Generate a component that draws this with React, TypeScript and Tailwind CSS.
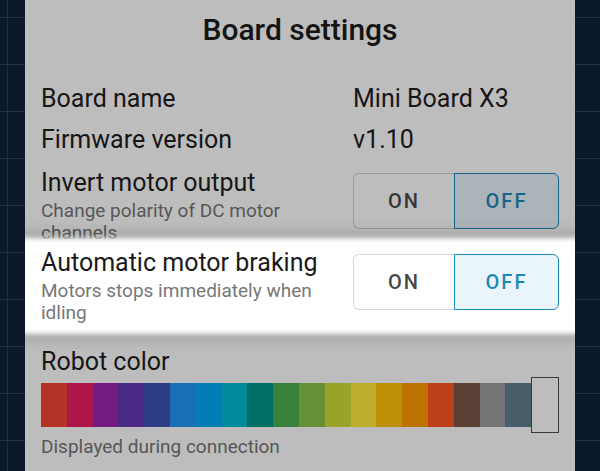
import React from 'react';

const swatches = [
  '#b53228', '#ac1649', '#731d82', '#4c2b87', '#2f3c86', '#186fb4', '#027db5',
  '#008b9d', '#006f65', '#38823b', '#679037', '#98a32a', '#bdae2c', '#bd8f05',
  '#bd7100', '#bd4019', '#5a3f35', '#757575', '#475d67',
];

const Toggle: React.FC<{ dim?: boolean }> = ({ dim }) => {
  return (
    <div className="flex h-[56px] w-[206px] text-[20px] font-medium tracking-[0.1em]">
      <div
        className={`flex w-[101px] items-center justify-center rounded-l-[6px] border border-r-0 ${
          dim ? 'border-[#9c9c9c] text-[#363636]' : 'border-[#d6d6d6] text-[#474747] bg-white'
        }`}
      >
        ON
      </div>
      <div
        className={`flex flex-1 items-center justify-center rounded-r-[6px] border ${
          dim ? 'border-[#146588] bg-[#abb4b9] text-[#146588]' : 'border-[#1b89b8] bg-[#eaf5fb] text-[#1b89b8]'
        }`}
      >
        OFF
      </div>
    </div>
  );
};

const InfoRow: React.FC<{ label: string; value: string }> = ({ label, value }) => (
  <div className="flex h-[41px] items-center text-[25px] leading-[30px] text-[#161616]">
    <span className="w-[312px]">{label}</span>
    <span>{value}</span>
  </div>
);

export default function App() {
  return (
    <div className="flex h-[471px] w-[600px] justify-center overflow-hidden bg-[#0a1829] bg-[linear-gradient(to_right,#223040_1px,transparent_1px),linear-gradient(to_bottom,#223040_1px,transparent_1px)] bg-[length:47px_47px] bg-[position:7px_17px]">
      <div className="h-full w-[550px] overflow-hidden bg-[#bdbdbd] font-['Roboto',sans-serif]">
        <div className="h-[78px] pt-[12px] text-center text-[30px] font-medium leading-[36px] text-[#141414]">
          Board settings
        </div>

        <div className="px-4">
          <InfoRow label="Board name" value="Mini Board X3" />
          <InfoRow label="Firmware version" value="v1.10" />

          <div className="flex h-[82px]">
            <div className="w-[312px] pt-[7.5px]">
              <div className="text-[25px] leading-[30px] text-[#161616]">Invert motor output</div>
              <div className="mt-[2px] w-[290px] text-[19px] leading-[22px] text-[#575757]">
                Change polarity of DC motor channels
              </div>
            </div>
            <div className="pt-[13px]">
              <Toggle dim />
            </div>
          </div>
        </div>

        <div className="relative z-10 flex h-[88px] bg-white px-4 shadow-[0_0_5px_4px_#fff,0_0_14px_8px_rgba(0,0,0,0.18)]">
          <div className="w-[312px] pt-[5.5px]">
            <div className="text-[25px] leading-[30px] text-[#1a1a1a]">Automatic motor braking</div>
            <div className="mt-[2px] w-[290px] text-[19px] leading-[22px] text-[#777777]">
              Motors stops immediately when idling
            </div>
          </div>
          <div className="pt-[12px]">
            <Toggle />
          </div>
        </div>

        <div className="px-4 pt-[16.5px]">
          <div className="text-[25px] leading-[30px] text-[#161616]">Robot color</div>
          <div className="flex h-[56px] w-[518px] items-center">
            {swatches.map((c) => (
              <div key={c} className="h-[44px] flex-1" style={{ backgroundColor: c }} />
            ))}
            <div className="h-[56px] flex-1 border border-[#383838] bg-[#bdbdbd]" />
          </div>
          <div className="mt-[3px] text-[19px] leading-[22px] text-[#575757]">Displayed during connection</div>
        </div>
      </div>
    </div>
  );
}
